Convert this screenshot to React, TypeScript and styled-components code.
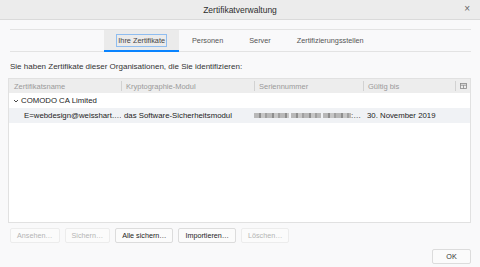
import React from 'react';
import styled, { createGlobalStyle } from 'styled-components';

const GlobalStyle = createGlobalStyle`
  html, body {
    margin: 0;
    padding: 0;
    background: #f9f9fa;
  }
  body {
    font-family: "Liberation Sans", Arial, sans-serif;
    font-size: 8px;
    color: #2a2a2e;
  }
`

const Window = styled.div`
  width: 480px;
  height: 267px;
  display: flex;
  flex-direction: column;
  background: #f9f9fa;
  overflow: hidden;
`

const TitleBar = styled.div`
  height: 19px;
  flex: none;
  display: flex;
  align-items: center;
  justify-content: center;
  position: relative;
  background: #ececec;
  border-bottom: 1px solid #dadada;
  font-size: 8.5px;
  color: #2e2e2e;
`

const CloseButton = styled.span`
  position: absolute;
  right: 10px;
  top: 4px;
  font-size: 10px;
  color: #666;
  line-height: 10px;
`

const Body = styled.div`
  flex: 1;
  display: flex;
  flex-direction: column;
  padding: 9px 9px 0 8px;
`

const TabBar = styled.div`
  margin-left: 2px;
  height: 21px;
  display: flex;
  justify-content: center;
  border-top: 1px solid #e3e3e3;
  border-bottom: 1px solid #e3e3e3;
`

const Tab = styled.div<{ $active?: boolean }>`
  display: flex;
  align-items: center;
  justify-content: center;
  padding: 0 ${p => (p.$active ? '13px' : '12px')};
  background: ${p => (p.$active ? '#ebebeb' : 'transparent')};
  border-bottom: 2px solid ${p => (p.$active ? '#0a84ff' : 'transparent')};
  margin-bottom: -1px;
  color: ${p => (p.$active ? '#444' : '#555')};
  font-size: 7.3px;
`

const TabLabel = styled.span<{ $focus?: boolean }>`
  padding: 1px 1px;
  outline: ${p => (p.$focus ? '1px solid #8fbdf0' : 'none')};
`

const Intro = styled.div`
  margin: 10px 0 6px 2px;
  font-size: 8px;
  color: #333;
  height: 10px;
  line-height: 10px;
`

const Table = styled.div`
  height: 143px;
  display: flex;
  flex-direction: column;
  background: #fff;
  border: 1px solid #e1e1e1;
`

const HeaderRow = styled.div`
  height: 14px;
  display: grid;
  grid-template-columns: 112px 133px 109px 92px 1fr;
  background: #ededed;
  align-items: center;
`

const HeaderCell = styled.div<{ $first?: boolean }>`
  height: 10px;
  display: flex;
  align-items: center;
  padding-left: ${p => (p.$first ? '5px' : '4px')};
  color: #9a9a9a;
  font-size: 7.5px;
  border-left: ${p => (p.$first ? 'none' : '1px solid #d2d2d2')};
`

const PickerCell = styled.div`
  height: 10px;
  display: flex;
  align-items: center;
  justify-content: center;
  border-left: 1px solid #d2d2d2;
`

const GroupRow = styled.div`
  height: 15px;
  display: flex;
  align-items: center;
  padding-left: 4px;
  gap: 2px;
  font-size: 7.8px;
  color: #222;
`

const CertRow = styled.div`
  height: 15px;
  display: grid;
  grid-template-columns: 112px 133px 109px 1fr;
  align-items: center;
  background: #f0f2f5;
  font-size: 7.8px;
  color: #222;
`

const Cell = styled.div<{ $indent?: number }>`
  padding-left: ${p => p.$indent ?? 1}px;
  white-space: nowrap;
  overflow: hidden;
  display: flex;
  align-items: center;
`

const Blurred = styled.span`
  display: inline-flex;
  gap: 2px;
  align-items: center;
  filter: blur(0.7px);
`

const BlurGroup = styled.span<{ $w: number }>`
  display: inline-block;
  width: ${p => p.$w}px;
  height: 5px;
  background: repeating-linear-gradient(90deg, #b8b8b8 0 5px, #8e8e8e 5px 7px, #c6c6c6 7px 11px, #a0a0a0 11px 13px);
`

const ButtonRow = styled.div`
  display: flex;
  gap: 5px;
  margin: 5px 0 0 2px;
`

const Button = styled.button<{ $disabled?: boolean }>`
  height: 15px;
  padding: 0 6px;
  font-family: inherit;
  font-size: 7.2px;
  background: #fbfbfb;
  border: 1px solid ${p => (p.$disabled ? '#ececec' : '#dcdcdc')};
  border-radius: 2px;
  color: ${p => (p.$disabled ? '#b4b4b4' : '#222')};
  cursor: default;
  line-height: 13px;
`

const Footer = styled.div`
  display: flex;
  justify-content: flex-end;
  margin-top: 6px;
`

const OkButton = styled(Button)`
  width: 39px;
  padding: 0;
  height: 15px;
  color: #333;
`

const Chevron = () => (
  <svg width="6" height="6" viewBox="0 0 6 6">
    <path d="M1 2 L3 4 L5 2" fill="none" stroke="#333" strokeWidth="0.9" />
  </svg>
)

const ColumnPicker = () => (
  <svg width="7" height="6" viewBox="0 0 7 6">
    <rect x="0.5" y="0.5" width="6" height="5" fill="none" stroke="#888" strokeWidth="0.8" />
    <line x1="0.5" y1="2.2" x2="6.5" y2="2.2" stroke="#888" strokeWidth="0.8" />
    <line x1="3.5" y1="2.2" x2="3.5" y2="5.5" stroke="#888" strokeWidth="0.8" />
  </svg>
)

export default function App() {
  return (
    <>
      <GlobalStyle />
      <Window>
        <TitleBar>
          Zertifikatverwaltung
          <CloseButton>×</CloseButton>
        </TitleBar>
        <Body>
          <TabBar>
            <Tab $active>
              <TabLabel $focus>Ihre Zertifikate</TabLabel>
            </Tab>
            <Tab><TabLabel>Personen</TabLabel></Tab>
            <Tab><TabLabel>Server</TabLabel></Tab>
            <Tab><TabLabel>Zertifizierungsstellen</TabLabel></Tab>
          </TabBar>
          <Intro>Sie haben Zertifikate dieser Organisationen, die Sie identifizieren:</Intro>
          <Table>
            <HeaderRow>
              <HeaderCell $first>Zertifikatsname</HeaderCell>
              <HeaderCell>Kryptographie-Modul</HeaderCell>
              <HeaderCell>Seriennummer</HeaderCell>
              <HeaderCell>Gültig bis</HeaderCell>
              <PickerCell><ColumnPicker /></PickerCell>
            </HeaderRow>
            <GroupRow>
              <Chevron />
              COMODO CA Limited
            </GroupRow>
            <CertRow>
              <Cell $indent={15}>E=webdesign@weisshart.…</Cell>
              <Cell $indent={3}>das Software-Sicherheitsmodul</Cell>
              <Cell $indent={0}>
                <Blurred>
                  <BlurGroup $w={35} />
                  <BlurGroup $w={30} />
                  <BlurGroup $w={28} />
                </Blurred>
                :…
              </Cell>
              <Cell $indent={4}>30. November 2019</Cell>
            </CertRow>
          </Table>
          <ButtonRow>
            <Button $disabled>Ansehen…</Button>
            <Button $disabled>Sichern…</Button>
            <Button>Alle sichern…</Button>
            <Button>Importieren…</Button>
            <Button $disabled>Löschen…</Button>
          </ButtonRow>
          <Footer>
            <OkButton>OK</OkButton>
          </Footer>
        </Body>
      </Window>
    </>
  );
}
